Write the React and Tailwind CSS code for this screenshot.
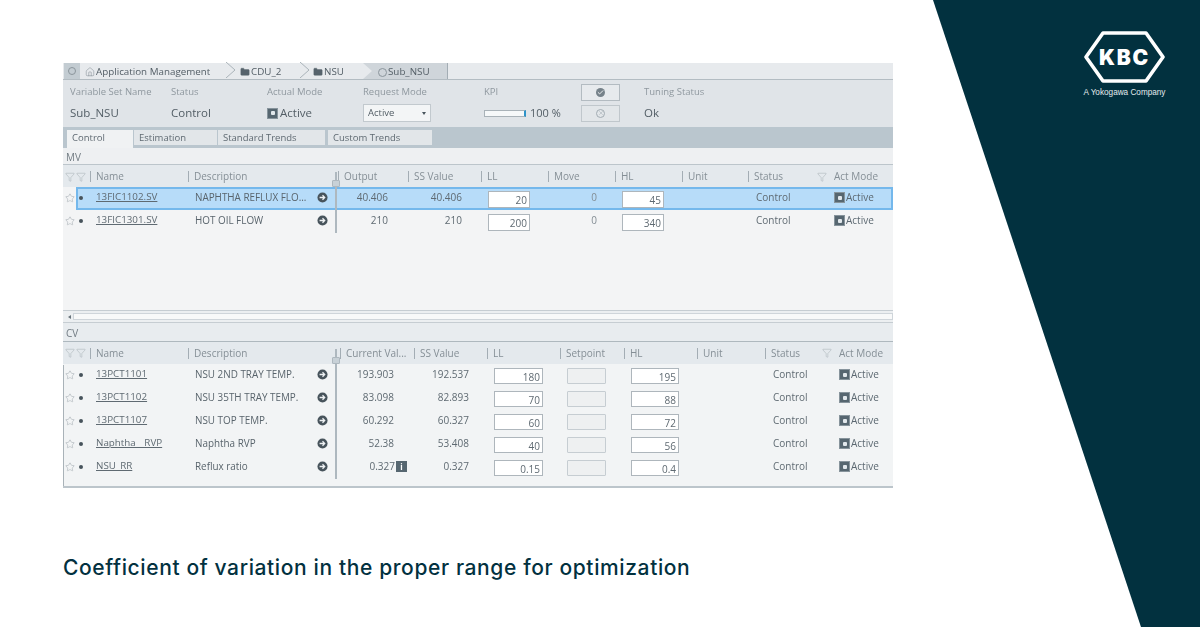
import React from 'react';
import { Star, Funnel, Home, Folder, Check, X } from 'lucide-react';

const Arrow = () => (
  <svg width="11" height="11" viewBox="0 0 12 12" className="shrink-0">
    <circle cx="6" cy="6" r="5.5" fill="#47535b" />
    <path d="M2.8 6h5M6 3.6 8.4 6 6 8.4" fill="none" stroke="#eef1f3" strokeWidth="1.4" />
  </svg>
);
const ModeIcon = () => (
  <span className="w-[11px] h-[11px] bg-[#566670] border border-[#87949c] flex items-center justify-center shrink-0">
    <span className="w-[4px] h-[4px] bg-[#e2e8ec] rounded-[1px]" />
  </span>
);
const Active = () => (
  <div className="flex items-center text-[10px] text-[#5c6871]"><ModeIcon /><span className="ml-px">Active</span></div>
);
const Input = ({ v, w }) => (
  <div className={`${w} mt-[3px] bg-white border border-[#aeb6bc] text-right text-[10px] leading-[16px] pr-[2px] text-[#5f6a72]`}>{v}</div>
);
const Divider = () => <span className="w-px h-[11px] bg-[#a3adb4] shrink-0" />;
const Head = ({ t, cls = '' }) => (
  <div className={`flex items-center gap-[5px] min-w-0 ${cls}`}>
    <Divider />
    <span className="text-[10px] text-[#858f96] whitespace-nowrap">{t}</span>
  </div>
);
const RowStart = ({ name, desc }) => (
  <>
    <div className="flex items-center pl-[2px] gap-[3px]">
      <Star size={10} strokeWidth={1} className="text-[#8b959c]" />
      <span className="w-[4px] h-[4px] rounded-full bg-[#47535b] ml-[1px]" />
    </div>
    <div className="pl-[2px] text-[9.8px] text-[#5f6a72] underline whitespace-pre">{name}</div>
    <div className="flex items-center justify-between pl-[7px] pr-[10px] text-[9.9px] text-[#59646c] whitespace-nowrap">
      <span>{desc}</span><Arrow />
    </div>
  </>
);
const HeadStart = () => (
  <>
    <div className="flex items-center pl-[2px] gap-[1px] text-[#98a2a8]">
      <Funnel size={10} strokeWidth={1} />
      <Funnel size={10} strokeWidth={1} />
    </div>
    <Head t="Name" cls="-ml-[4px]" />
    <Head t="Description" />
  </>
);
const Splitter = ({ top, height, handle }) => (
  <>
    <span className="absolute left-[272px] w-[2px] bg-[#aeb8bf]" style={{ top, height }} />
    <span className="absolute left-[269px] w-[8px] h-[7px] bg-[#c8d1d7] border border-[#aeb8bf] rounded-[1px]" style={{ top: handle }} />
  </>
);

const mvCols = 'grid grid-cols-[31px_94px_150px_70px_73px_67px_67px_67px_66px_68px_77px] items-center';
const cvCols = 'grid grid-cols-[31px_94px_150px_76px_73px_73px_64px_73px_68px_51px_77px] items-center';

const mv = [
  { name: '13FIC1102.SV', desc: 'NAPHTHA REFLUX FLO...', out: '40.406', ss: '40.406', ll: '20', hl: '45', sel: true },
  { name: '13FIC1301.SV', desc: 'HOT OIL FLOW', out: '210', ss: '210', ll: '200', hl: '340' },
];
const cv = [
  { name: '13PCT1101', desc: 'NSU 2ND TRAY TEMP.', cur: '193.903', ss: '192.537', ll: '180', hl: '195' },
  { name: '13PCT1102', desc: 'NSU 35TH TRAY TEMP.', cur: '83.098', ss: '82.893', ll: '70', hl: '88' },
  { name: '13PCT1107', desc: 'NSU TOP TEMP.', cur: '60.292', ss: '60.327', ll: '60', hl: '72' },
  { name: 'Naphtha__RVP', desc: 'Naphtha RVP', cur: '52.38', ss: '53.408', ll: '40', hl: '56' },
  { name: 'NSU_RR', desc: 'Reflux ratio', cur: '0.327', ss: '0.327', ll: '0.15', hl: '0.4', info: true },
];

const Chevron = () => (
  <svg width="12" height="16" viewBox="0 0 12 16" className="shrink-0 -mt-[2px]">
    <path d="M1 0l9 8L1 16" fill="none" stroke="#aab3b9" strokeWidth="1" />
  </svg>
);

const label = 'text-[9.5px] text-[#8f989f] whitespace-nowrap';
const value = 'text-[11.5px] text-[#525d65]';

export default function App() {
  return (
    <div className="relative w-[1200px] h-[627px] overflow-hidden bg-white font-['Open_Sans',sans-serif] pt-[63px] pl-[63px]">
      <svg className="absolute inset-0" width="1200" height="627" viewBox="0 0 1200 627">
        <polygon points="933,0 1200,0 1200,627 1141,627" fill="#02313f" />
      </svg>

      <div className="absolute left-[1084px] top-[31px] w-[81px] flex flex-col items-center text-white">
        <div className="relative w-[81px] h-[52px] flex items-center justify-center">
          <svg className="absolute inset-0" width="81" height="52" viewBox="0 0 81 52">
            <polygon points="19,2 62,2 79,26 62,50 19,50 2,26" fill="none" stroke="#fff" strokeWidth="3.6" strokeLinejoin="round" />
          </svg>
          <span className="relative font-['Inter',sans-serif] font-black text-[21px] leading-none tracking-[1.8px]">KBC</span>
        </div>
        <span className="mt-[4px] font-['Liberation_Sans',sans-serif] text-[8.2px] leading-[11px] whitespace-nowrap text-[#e4ebee]">A Yokogawa Company</span>
      </div>

      {/* application screenshot */}
      <div className="relative w-[830px] h-[425px] flex flex-col bg-[#f2f4f5] blur-[0.6px]">
        {/* breadcrumb */}
        <div className="h-[17px] flex items-center bg-[#e7eaed] border-b border-[#b3bcc2] text-[9.8px] text-[#525d65] shrink-0">
          <div className="w-[16px] h-[16px] ml-px bg-[#c3ccd2] flex items-center justify-center">
            <span className="w-[8px] h-[8px] rounded-full border border-[#8b959c]" />
          </div>
          <div className="flex items-center gap-[1px] ml-[5px] w-[131px] pt-[2px]"><Home size={10} strokeWidth={1.2} className="text-[#7a858c]" /><span className="whitespace-nowrap">Application Management</span></div>
          <div className="ml-[9px]"><Chevron /></div>
          <div className="flex items-center gap-[1px] ml-[3px] w-[59px] pt-[2px]"><Folder size={10} fill="#56636c" strokeWidth={1} className="text-[#56636c]" /><span>CDU_2</span></div>
          <Chevron />
          <div className="flex items-center gap-[1px] ml-[2px] w-[50px] pt-[2px]"><Folder size={10} fill="#56636c" strokeWidth={1} className="text-[#56636c]" /><span>NSU</span></div>
          <div className="relative h-[16px] w-[85px] bg-[#cfd5da] border-r border-[#a3adb4] flex items-center pl-[15px] gap-[1px] pt-[2px]">
            <svg className="absolute left-0 top-0" width="11" height="16" viewBox="0 0 11 16"><polygon points="0,0 9,8 0,16" fill="#e7eaed" /></svg>
            <span className="w-[9px] h-[9px] rounded-full border border-[#8b959c]" /><span>Sub_NSU</span>
          </div>
        </div>

        {/* summary */}
        <div className="h-[47px] bg-[#e0e4e8] grid grid-cols-[108px_96px_96px_121px_97px_63px_1fr] grid-rows-[24px_18px] items-center shrink-0">
          <span className={`pl-[7px] ${label}`}>Variable Set Name</span>
          <span className={label}>Status</span>
          <span className={label}>Actual Mode</span>
          <span className={label}>Request Mode</span>
          <span className={label}>KPI</span>
          <div className="w-[39px] h-[17px] border border-[#b3bbc1] bg-[#e7eaed] flex items-center justify-center">
            <span className="w-[9px] h-[9px] rounded-full bg-[#76828a] flex items-center justify-center"><Check size={7} strokeWidth={3} className="text-white" /></span>
          </div>
          <span className={label}>Tuning Status</span>

          <span className={`pl-[7px] ${value}`}>Sub_NSU</span>
          <span className={value}>Control</span>
          <div className={`flex items-center gap-[2px] ${value}`}><ModeIcon /><span>Active</span></div>
          <div className="w-[68px] h-[18px] bg-[#f3f5f6] border border-[#c2c9ce] flex items-center justify-between px-[4px] text-[9.5px] text-[#525d65]">
            <span>Active</span><span className="w-0 h-0 border-x-[2.5px] border-x-transparent border-t-[3px] border-t-[#47535b]" />
          </div>
          <div className="flex items-center">
            <div className="w-[42px] h-[7px] bg-[#f6f8f9] border border-[#a9b2b8] border-r-[2px] border-r-[#2e93c9]" />
            <span className="ml-[4px] text-[11px] text-[#525d65] whitespace-nowrap">100 %</span>
          </div>
          <div className="w-[39px] h-[17px] border border-[#c0c7cc] bg-[#e2e6e9] flex items-center justify-center">
            <span className="w-[9px] h-[9px] rounded-full border border-[#a2acb3] flex items-center justify-center"><X size={6} className="text-[#a2acb3]" /></span>
          </div>
          <span className={value}>Ok</span>
        </div>

        {/* tabs */}
        <div className="h-[21px] bg-[#bac6ce] flex items-start pl-[4px] gap-[1px] pt-[3px] text-[9.5px] text-[#5f6a72] shrink-0">
          <div className="w-[66px] h-[18px] bg-[#f0f2f3] pl-[5px] leading-[16px]">Control</div>
          <div className="w-[83px] h-[15px] bg-[#e2e6e9] pl-[5px] leading-[16px]">Estimation</div>
          <div className="w-[107px] h-[15px] bg-[#e2e6e9] pl-[5px] leading-[16px]">Standard Trends</div>
          <div className="w-[104px] h-[15px] bg-[#e2e6e9] pl-[5px] leading-[16px] ml-[2px]">Custom Trends</div>
        </div>

        {/* MV */}
        <div className="relative flex flex-col h-[162px] shrink-0">
          <div className="h-[17px] bg-[#eef0f2] border-b border-[#bcc5cb] pl-[3px] text-[10px] leading-[18px] text-[#727c83] shrink-0">MV</div>
          <div className={`h-[22px] pt-[1px] bg-[#e4e9ed] shrink-0 ${mvCols}`}>
            <HeadStart />
            <Head t="Output" />
            <Head t="SS Value" />
            <Head t="LL" />
            <Head t="Move" />
            <Head t="HL" />
            <Head t="Unit" />
            <Head t="Status" />
            <div className="flex items-center pl-[1px]">
              <Funnel size={10} strokeWidth={1} className="text-[#98a2a8]" /><span className="ml-[1px]"><Divider /></span>
              <span className="ml-[6px] text-[10px] text-[#858f96] whitespace-nowrap">Act Mode</span>
            </div>
          </div>
          {mv.map((r) => (
            <div key={r.name} className={`${mvCols} relative isolate h-[23px] pb-[2px] shrink-0 bg-[#f3f4f5]`}>
              {r.sel && <span className="absolute -z-10 left-[13px] right-0 top-0 bottom-0 bg-[#b7dcf9] border-2 border-[#74b8ec]" />}
              <RowStart name={r.name} desc={r.desc} />
              <div className="text-right pr-[20px] text-[10px] text-[#5f6a72]">{r.out}</div>
              <div className="text-right pr-[19px] text-[10px] text-[#5f6a72]">{r.ss}</div>
              <Input v={r.ll} w="w-[42px] h-[17px] ml-[7px]" />
              <div className="text-right pr-[18px] text-[10px] text-[#838d94]">0</div>
              <Input v={r.hl} w="w-[42px] h-[17px] ml-[7px]" />
              <div />
              <div className="pl-[8px] text-[10px] text-[#5f6a72]">Control</div>
              <div className="pl-[18px]"><Active /></div>
            </div>
          ))}
          <div className="flex-1 bg-[#f3f4f5]" />
          <Splitter top="24px" height="61px" handle="32px" />
        </div>

        {/* scrollbar */}
        <div className="h-[13px] bg-[#eceff1] flex items-center pl-[5px] gap-[2px] shrink-0 border-y border-[#c6cdd2]">
          <span className="w-0 h-0 border-y-[2px] border-y-transparent border-r-[3px] border-r-[#68737b]" />
          <div className="flex-1 h-[7px] bg-[#f8f9f9] border border-[#cfd5da]" />
        </div>

        {/* CV */}
        <div className="relative flex flex-col flex-1 border-b-2 border-b-[#bcc5cb]">
          <div className="h-[19px] bg-[#e8ecef] border-b border-[#aeb8be] pl-[3px] text-[10px] leading-[20px] text-[#727c83] shrink-0">CV</div>
          <div className={`h-[22px] bg-[#e4e9ed] shrink-0 ${cvCols}`}>
            <HeadStart />
            <Head t="Current Val..." cls="pl-[2px]" />
            <Head t="SS Value" />
            <Head t="LL" />
            <Head t="Setpoint" />
            <Head t="HL" />
            <Head t="Unit" />
            <Head t="Status" />
            <div className="flex items-center pl-[6px]">
              <Funnel size={10} strokeWidth={1} className="text-[#98a2a8]" /><span className="ml-[3px]"><Divider /></span>
              <span className="ml-[4px] text-[10px] text-[#858f96] whitespace-nowrap">Act Mode</span>
            </div>
          </div>
          {cv.map((r) => (
            <div key={r.name} className={`${cvCols} h-[23px] pb-[2px] shrink-0`}>
              <RowStart name={r.name} desc={r.desc} />
              <div className={`flex items-center justify-end text-[10px] text-[#5f6a72] ${r.info ? 'pr-[7px]' : 'pr-[20px]'}`}>
                {r.cur}
                {r.info && <span className="ml-[1px] w-[11px] h-[11px] bg-[#566670] text-white text-[8px] leading-[11px] text-center font-bold">i</span>}
              </div>
              <div className="text-right pr-[18px] text-[10px] text-[#5f6a72]">{r.ss}</div>
              <Input v={r.ll} w="w-[49px] h-[16px] ml-[7px]" />
              <div className="w-[39px] h-[16px] mt-[3px] ml-[7px] bg-[#eef0f1] border border-[#c6cdd2] rounded-[1px]" />
              <Input v={r.hl} w="w-[48px] h-[16px] ml-[7px]" />
              <div />
              <div className="pl-[8px] text-[10px] text-[#5f6a72]">Control</div>
              <div className="pl-[23px]"><Active /></div>
            </div>
          ))}
          <span className="absolute left-0 top-[42px] bottom-0 w-px bg-[#a9b2b8]" />
          <Splitter top="26px" height="130px" handle="34px" />
        </div>
      </div>

      <p className="mt-[66px] font-['Inter',sans-serif] font-medium text-[21px] leading-[28px] tracking-[0.62px] text-[#02313f] whitespace-nowrap">
        Coefficient of variation in the proper range for optimization
      </p>
    </div>
  );
}
